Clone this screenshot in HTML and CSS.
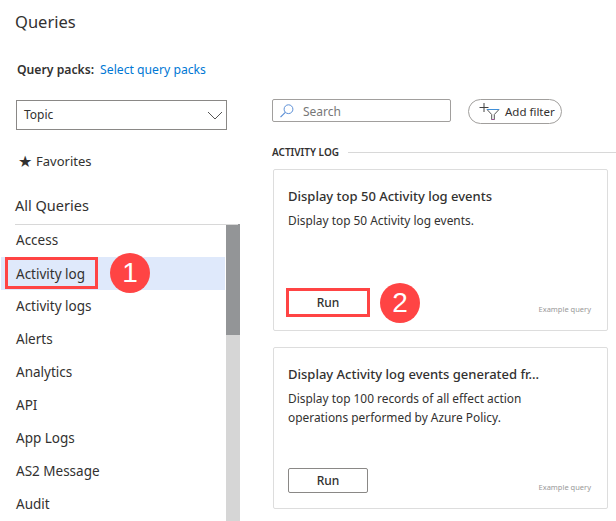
FILE: index.html
```html
<!DOCTYPE html>
<html lang="en">
<head>
    <meta charset="UTF-8">
    <title>Queries</title>
    <link rel="stylesheet" href="styles.css">
</head>
<body>
  <div class="page">
    <div class="left">
      <h1 class="title">Queries</h1>
      <div class="packs"><b>Query packs:</b><a href="#">Select query packs</a></div>
      <div class="select">
        <span>Topic</span>
        <svg width="16" height="9" viewBox="0 0 16 9"><path d="M1 1l7 7 7-7" fill="none" stroke="#555" stroke-width="1"/></svg>
      </div>
      <div class="favorites"><span class="star">★</span>Favorites</div>
      <h2 class="all">All Queries</h2>
      <div class="list-wrap">
        <ul class="list">
          <li>Access</li>
          <li class="selected"><span class="mark">Activity log</span><span class="badge badge-one">1</span></li>
          <li>Activity logs</li>
          <li>Alerts</li>
          <li>Analytics</li>
          <li>API</li>
          <li>App Logs</li>
          <li>AS2 Message</li>
          <li>Audit</li>
        </ul>
        <div class="scrollbar"><div class="thumb"></div></div>
      </div>
    </div>

    <div class="right">
      <div class="toolbar">
        <div class="search">
          <svg width="16" height="16" viewBox="0 0 16 16"><circle cx="9.5" cy="6.2" r="4.4" fill="none" stroke="#5b8fd6" stroke-width="1"/><path d="M6.300 9.400L1.500 14.200" stroke="#5b8fd6" stroke-width="1.200"/></svg>
          <span>Search</span>
        </div>
        <div class="add-filter">
          <svg width="24" height="20" viewBox="0 0 24 20"><path d="M6 1v9M1.500 5.500h9" stroke="#444" stroke-width="1" fill="none"/><path d="M9 7.500h12l-4.700 5v5l-2.600 0v-5z" fill="none" stroke="#555" stroke-width="1"/><path d="M9 7.500h12" stroke="#3f8fd8" stroke-width="1"/><path d="M13.700 17.500h2.600" stroke="#a04a9a" stroke-width="1"/></svg>
          <span>Add filter</span>
        </div>
      </div>
      <div class="section"><span>ACTIVITY LOG</span><i></i></div>

      <div class="card">
        <h3>Display top 50 Activity log events</h3>
        <p>Display top 50 Activity log events.</p>
        <div class="card-foot">
          <button class="run run-marked">Run</button>
          <span class="badge badge-two">2</span>
          <small>Example query</small>
        </div>
      </div>

      <div class="card">
        <h3>Display Activity log events generated fr...</h3>
        <p>Display top 100 records of all effect action operations performed by Azure Policy.</p>
        <div class="card-foot">
          <button class="run">Run</button>
          <small>Example query</small>
        </div>
      </div>
    </div>
  </div>
</body>
</html>
```

FILE: styles.css
```css
html, body {
    margin: 0;
    height: 521px;
    overflow: hidden;
    background: #ffffff;
}

body {
    font-family: "Noto Sans", "Open Sans", sans-serif;
    font-size: 12px;
    color: #323130;
}

.page {
    display: flex;
    height: 521px;
}

/* left column */
.left {
    width: 240px;
    flex: none;
    display: flex;
    flex-direction: column;
}

.title {
    margin: 11px 0 0 15px;
    font-size: 16.5px;
    line-height: 22px;
    font-weight: 400;
}

.packs {
    margin: 27px 0 0 17px;
    line-height: 20px;
    font-size: 12.2px;
    display: flex;
    gap: 6px;
}

.packs b {
    font-weight: 600;
}

.packs a {
    color: #0078d4;
    text-decoration: none;
}

.select {
    margin: 20px 0 0 16px;
    width: 199px;
    height: 28px;
    border: 1px solid #8a8886;
    display: flex;
    align-items: center;
    justify-content: space-between;
    padding: 0 3px 0 7px;
}

.select span {
    padding-bottom: 2px;
}

.favorites {
    margin: 21px 0 0 18px;
    line-height: 20px;
    font-size: 13px;
    display: flex;
    align-items: center;
}

.star {
    width: 18px;
    font-size: 16px;
}

.all {
    margin: 24px 0 0 15px;
    font-size: 14.5px;
    line-height: 20px;
    font-weight: 400;
}

.list-wrap {
    margin-top: 9px;
    display: flex;
    flex: 1;
    min-height: 0;
    overflow: hidden;
    position: relative;
}

.list-wrap::before {
    content: "";
    position: absolute;
    left: 15px;
    right: 2px;
    top: 0;
    height: 1px;
    background: #d8d8d8;
}

.list {
    list-style: none;
    margin: 0;
    padding: 0 0 0 1px;
    flex: 1;
}

.list li {
    height: 33px;
    line-height: 33px;
    padding-left: 15px;
    font-size: 13.5px;
    position: relative;
}

.list .selected {
    background: #dfe9fb;
}

.mark {
    position: absolute;
    left: 4px;
    top: 0;
    width: 93px;
    height: 32px;
    line-height: 29px;
    padding-left: 8px;
    box-sizing: border-box;
    border: 3px solid #ff4444;
}

.scrollbar {
    width: 14px;
    flex: none;
    background: #d6d6d6;
    margin-left: 1px;
}

.thumb {
    height: 111px;
    background: #939597;
}

/* numbered callouts */
.badge {
    position: absolute;
    width: 40px;
    height: 40px;
    border-radius: 50%;
    background: #ff4444;
    color: #ffffff;
    font-family: "Liberation Sans", sans-serif;
    font-size: 28px;
    line-height: 40px;
    text-align: center;
}

.badge-one {
    left: 109px;
    top: -4px;
}

.badge-two {
    left: 92px;
    top: -7px;
}

/* right column */
.right {
    margin-left: 32px;
    flex: 1;
    min-width: 0;
}

.toolbar {
    margin-top: 99px;
    display: flex;
    align-items: flex-start;
    gap: 17px;
}

.search {
    width: 179px;
    height: 23px;
    box-sizing: border-box;
    border: 1px solid #a19f9d;
    border-radius: 2px;
    display: flex;
    align-items: center;
    gap: 8px;
    padding-left: 6px;
    color: #777;
}

.search span {
    padding-top: 2px;
}

.add-filter {
    width: 94px;
    height: 25px;
    box-sizing: border-box;
    border: 1px solid #a19f9d;
    border-radius: 13px;
    display: flex;
    align-items: center;
    gap: 3px;
    padding-left: 9px;
    font-size: 11.5px;
}

.section {
    margin-top: 20px;
    display: flex;
    align-items: center;
    gap: 9px;
    font-size: 10px;
    font-weight: 600;
    line-height: 16px;
}

.section i {
    flex: 1;
    height: 1px;
    background: #d8d8d8;
}

.card {
    margin: 9px 8px 16px 1px;
    height: 162px;
    box-sizing: border-box;
    border: 1px solid #dddddd;
    border-radius: 2px;
    padding: 16px 14px 0;
    display: flex;
    flex-direction: column;
}

.card h3 {
    margin: 0;
    font-size: 13px;
    line-height: 20px;
    font-weight: 500;
}

.card p {
    margin: 5px 0 0;
    font-size: 11.9px;
    line-height: 19px;
    width: 245px;
}

.card-foot {
    margin-top: auto;
    margin-bottom: 15px;
    display: flex;
    align-items: flex-end;
    justify-content: space-between;
    position: relative;
}

.run {
    width: 80px;
    height: 25px;
    box-sizing: border-box;
    background: #ffffff;
    border: 1px solid #8a8886;
    border-radius: 2px;
    font-family: inherit;
    font-size: 12px;
    font-weight: 500;
    color: #323130;
    padding: 0;
}

.run-marked {
    outline: 2px solid #ff4444;
    border-color: #ff4444;
    border-radius: 0;
}

.card small {
    font-size: 7.5px;
    line-height: 12px;
    color: #999999;
    margin-right: 2px;
}
```
